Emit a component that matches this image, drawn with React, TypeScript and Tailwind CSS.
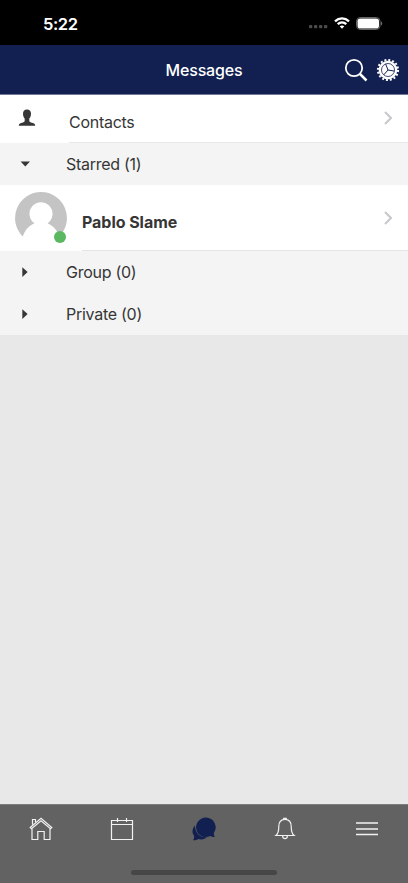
import React from "react";

const font = "font-[Inter,'Liberation_Sans',sans-serif]";

const StatusBar = () => (
  <div className="flex h-[45px] shrink-0 items-center justify-between bg-black pl-[43px] pr-[25px] text-white">
    <span className="mt-[3px] text-[16.5px] font-semibold leading-5 tracking-[-0.4px]">5:22</span>
    <div className="mt-px flex items-center">
      <svg className="mt-2 h-1 w-[19px]" viewBox="0 0 19 4" fill="#4a4a4a">
        <rect x="0" y="0" width="3.3" height="3.3" rx="1" />
        <rect x="5" y="0" width="3.3" height="3.3" rx="1" />
        <rect x="10" y="0" width="3.3" height="3.3" rx="1" />
        <rect x="15" y="0" width="3.3" height="3.3" rx="1" />
      </svg>
      <svg className="ml-[6px] h-3 w-4" viewBox="0 0 16 12" fill="none" stroke="white" strokeWidth="2.3">
        <path d="M1 4.3C5 .5 11 .5 15 4.3" />
        <path d="M3.7 7.2c2.5-2.3 6.1-2.3 8.6 0" />
        <path d="M5.7 9.3 8 11.7l2.3-2.4c-1.3-1.2-3.3-1.2-4.6 0z" fill="white" stroke="none" />
      </svg>
      <svg className="ml-[6px] h-[13px] w-[27px]" viewBox="0 0 27 13">
        <rect x=".5" y=".5" width="23.5" height="12" rx="3.7" fill="none" stroke="#666" />
        <rect x="1.5" y="1.5" width="21.5" height="10" rx="2.8" fill="white" />
        <path d="M25 4.3c1.8.7 1.8 3.7 0 4.4z" fill="#666" />
      </svg>
    </div>
  </div>
);

const Header = () => (
  <header className="grid h-[50px] shrink-0 grid-cols-[1fr_auto_1fr] items-center border-b border-[#71799a] bg-[#112050] text-white">
    <span />
    <h1 className="text-[16px] font-medium leading-5 tracking-[-0.15px]">Messages</h1>
    <div className="flex items-center justify-end gap-2 pr-2">
      <svg className="h-6 w-6" viewBox="0 0 24 24" fill="none" stroke="white">
        <circle cx="10" cy="10" r="8.2" strokeWidth="1.8" />
        <path d="m16 16 6.5 6.5" strokeWidth="2.5" />
      </svg>
      <svg className="h-6 w-6" viewBox="0 0 24 24" fill="none">
        <circle cx="12" cy="12" r="10.1" stroke="white" strokeWidth="2" strokeDasharray="2 1.966" />
        <circle cx="12" cy="12" r="9.3" fill="white" />
        <circle cx="12" cy="12" r="6.5" stroke="#112050" strokeWidth=".8" />
        <path d="M12 12 9.6 5.9M12 12l6.4 1.1M12 12l-4.3 4.9" stroke="#112050" strokeWidth="1" />
      </svg>
    </div>
  </header>
);

const Chevron = ({ className }: { className?: string }) => (
  <svg
    className={`ml-auto h-[14px] w-2 shrink-0 ${className ?? ""}`}
    viewBox="0 0 8 14"
    fill="none"
    stroke="#c7c7cc"
    strokeWidth="2"
  >
    <path d="m1 1 6 6-6 6" />
  </svg>
);

const Section = ({ label, open }: { label: string; open?: boolean }) => (
  <div className="flex h-[42px] items-center bg-[#f4f4f4] pl-5">
    <svg className="h-[10px] w-[10px] shrink-0" viewBox="0 0 10 10" fill="#363636">
      {open ? <path d="M.6 2.6h9.4L5.3 7.6z" /> : <path d="M2.3.3 7.6 5 2.3 9.9z" />}
    </svg>
    <span className="ml-9">{label}</span>
  </div>
);

const Avatar = () => (
  <div className="relative h-[52px] w-[52px] shrink-0">
    <svg className="h-full w-full" viewBox="0 0 52 52">
      <path
        d="M26 0a26 26 0 0 0-18.2 44.5C10 38 14 33.5 19.5 31.2a11.5 11.5 0 1 1 13 0C38 33.5 42 38 44.2 44.5A26 26 0 0 0 26 0z"
        fill="#c4c4c4"
      />
    </svg>
    <span className="absolute left-[39px] top-[39px] h-3 w-3 rounded-full bg-[#5cb860]" />
  </div>
);

const TabBar = () => (
  <nav className="flex h-[79px] shrink-0 flex-col border-t border-[#7c7c7c] bg-[#626262]">
    <div className="grid h-12 grid-cols-5 place-items-center text-[#f2f2f2]">
      <svg className="h-6 w-6" viewBox="0 0 24 24" fill="none" stroke="currentColor" strokeWidth="1.2">
        <path d="M1.2 10.5 12 1.4l10.8 9.1-1.3 1.2L12 3.8l-9.5 7.9z" />
        <path d="M3.5 7.8V2.5h3v2.6M3 11.5v11h5.8v-8h6.4v8H21v-11" />
      </svg>
      <svg className="h-6 w-6" viewBox="0 0 24 24" fill="none" stroke="currentColor" strokeWidth="1.2">
        <path d="M1.5 3.5h21v19h-21zM1.5 7.5h21M7.5 1v4M16.5 1v4" />
      </svg>
      <svg className="h-6 w-6" viewBox="0 0 24 24" fill="#112050">
        <path d="M3 8.5C-.5 12.5.2 16.5 2 18.5c.3 1.7 0 3.5-.8 4.8 2.2 0 4-.5 5.2-1.3 3 .9 6.4.3 9-2C9.5 21.3 3 17 3 8.5z" />
        <path d="M14 .5a9.8 9.8 0 1 0 4.2 18.6c1.5.7 3 1 4.7.9-.9-1.2-1.2-2.5-1.1-4A9.8 9.8 0 0 0 14 .5z" />
      </svg>
      <svg className="mr-px h-6 w-6" viewBox="0 0 24 24" fill="none" stroke="currentColor" strokeWidth="1.2">
        <path d="M10.7 2.5V1.4h2.6v1.1M12 2.3c-4.5 0-6.2 3.1-6.2 7.1 0 5-.9 7.5-2.9 9.1h18.2c-2-1.6-2.9-4.1-2.9-9.1 0-4-1.7-7.1-6.2-7.1z" />
        <path d="M9.6 18.8c0 3.8 4.8 3.8 4.8 0" />
      </svg>
      <svg className="h-6 w-6" viewBox="0 0 24 24" fill="none" stroke="currentColor" strokeWidth="1.3">
        <path d="M1 6h22M1 12h22M1 17.5h22" />
      </svg>
    </div>
    <div className="mx-auto mt-[17px] h-[5px] w-[146px] rounded-full bg-[#464646]" />
  </nav>
);

const App = () => (
  <div
    className={`flex h-[883px] w-[408px] flex-col bg-[#e8e8e8] text-[16px] leading-5 tracking-[-0.27px] text-[#363636] ${font}`}
  >
    <StatusBar />
    <Header />
    <main className="flex-1">
      <div className="flex h-12 bg-white">
        <svg className="ml-[18px] mt-[14px] h-[18px] w-[18px] shrink-0" viewBox="0 0 18 18" fill="#363636">
          <path d="M9 .5c-2.8 0-4 1.8-4 4.2 0 2 .7 3.7 1.7 4.9v2.2c0 1.4-2.1 1.8-3.7 2.3-1.4.5-2.2 1.2-2.2 2.7h16.4c0-1.5-.8-2.2-2.2-2.7-1.6-.5-3.7-.9-3.7-2.3V9.6C12.3 8.4 13 6.7 13 4.7 13 2.3 11.8.5 9 .5z" />
        </svg>
        <div className="ml-[33px] flex flex-1 items-center border-b border-[#e8e8e8] pr-4">
          <span className="mt-[7px]">Contacts</span>
          <Chevron className="mb-px" />
        </div>
      </div>
      <Section label="Starred (1)" open />
      <div className="flex h-[66px] items-center bg-white pl-[15px]">
        <Avatar />
        <div className="ml-[15px] flex h-full flex-1 items-center border-b border-[#e5e5e5] pr-4">
          <span className="mt-2 font-bold tracking-[-0.05px]">Pablo Slame</span>
          <Chevron />
        </div>
      </div>
      <Section label="Group (0)" />
      <Section label="Private (0)" />
    </main>
    <TabBar />
  </div>
);

export default App;
